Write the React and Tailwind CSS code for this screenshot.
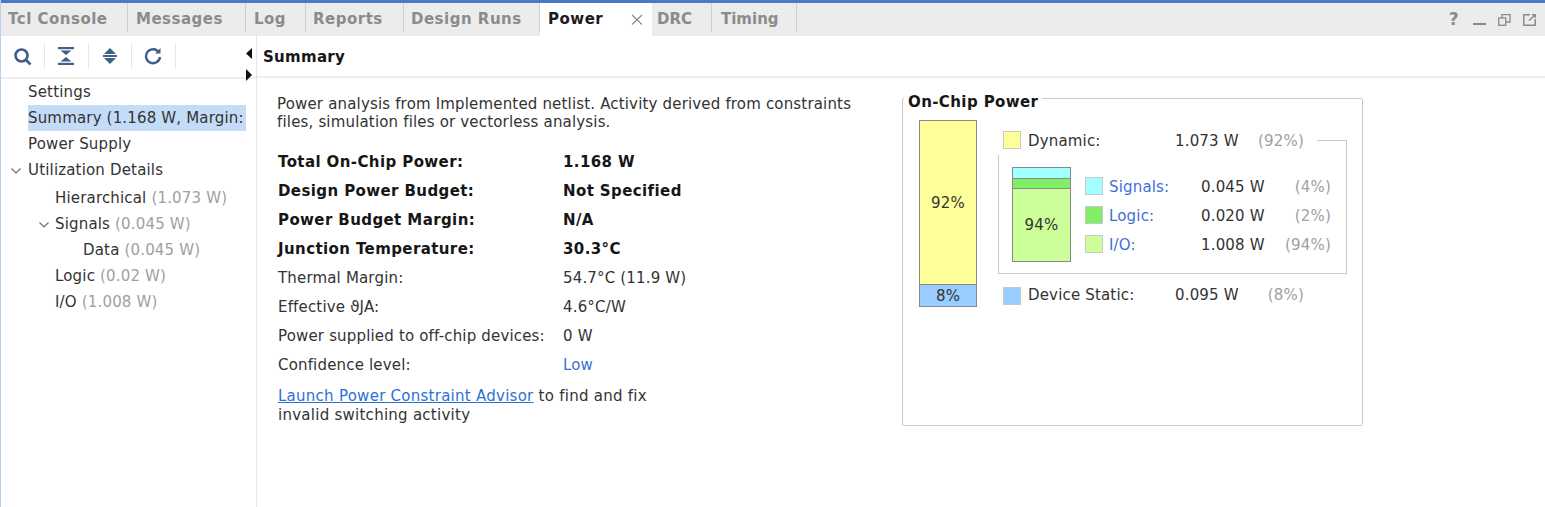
const tabs = [
  { label: 'Tcl Console', width: 'w-[127px] pl-[7px]' },
  { label: 'Messages', width: 'w-[118px] pl-[8px]' },
  { label: 'Log', width: 'w-[60px] pl-[8px]' },
  { label: 'Reports', width: 'w-[98px] pl-[7px]' },
  { label: 'Design Runs', width: 'w-[136px] pl-[7px]' },
];

const treeRows = [
  { label: 'Settings', indent: 'pl-[27px]' },
  { label: 'Summary (1.168 W, Margin:', indent: 'pl-[27px]', selected: true },
  { label: 'Power Supply', indent: 'pl-[27px]' },
  { label: 'Utilization Details', indent: 'pl-[27px]', open: 'left-[9px]' },
  { label: 'Hierarchical', value: '(1.073 W)', indent: 'pl-[54px] mt-[2px]' },
  { label: 'Signals', value: '(0.045 W)', indent: 'pl-[54px]', open: 'left-[37px]' },
  { label: 'Data', value: '(0.045 W)', indent: 'pl-[82px]' },
  { label: 'Logic', value: '(0.02 W)', indent: 'pl-[54px]' },
  { label: 'I/O', value: '(1.008 W)', indent: 'pl-[54px]' },
];

const summaryRows = [
  { label: 'Total On-Chip Power:', value: '1.168 W', bold: true },
  { label: 'Design Power Budget:', value: 'Not Specified', bold: true },
  { label: 'Power Budget Margin:', value: 'N/A', bold: true },
  { label: 'Junction Temperature:', value: '30.3°C', bold: true },
  { label: 'Thermal Margin:', value: '54.7°C (11.9 W)' },
  { label: 'Effective ϑJA:', value: '4.6°C/W' },
  { label: 'Power supplied to off-chip devices:', value: '0 W' },
  { label: 'Confidence level:', value: 'Low', link: true },
];

const dynamicRows = [
  { label: 'Signals', value: '0.045 W', pct: '(4%)', swatch: 'bg-[#a0ffff]' },
  { label: 'Logic', value: '0.020 W', pct: '(2%)', swatch: 'bg-[#80ee66]' },
  { label: 'I/O', value: '1.008 W', pct: '(94%)', swatch: 'bg-[#ccff99]' },
];

function Chevron({ className }) {
  return (
    <svg className={className} width="12" height="8" viewBox="0 0 12 8" fill="none" stroke="#6f6f6f" strokeWidth="1.2">
      <path d="M1.5 1.5 L6 6 L10.5 1.5" />
    </svg>
  );
}

function Sep() {
  return <div className="h-[26px] w-px bg-[#e6e6e6]" />;
}

function Toolbar() {
  return (
    <div className="flex h-[40px] items-center pl-[12px]">
      <svg width="19" height="19" viewBox="0 0 19 19" fill="none" stroke="#3f5f86" strokeWidth="2.6">
        <circle cx="8.5" cy="8.5" r="6" />
        <path d="M13 13 L17.5 17.5" />
      </svg>
      <div className="ml-[12px]"><Sep /></div>
      <svg className="ml-[13px]" width="16" height="18" viewBox="0 0 16 18" fill="#3f5f86">
        <rect x="0" y="0" width="16" height="2.2" />
        <path d="M2.5 3.5 H13.5 L8 8 Z" />
        <path d="M8 10 L13.5 14.5 H2.5 Z" />
        <rect x="0" y="15.8" width="16" height="2.2" />
      </svg>
      <div className="ml-[14px]"><Sep /></div>
      <svg className="ml-[13px]" width="16" height="18" viewBox="0 0 16 18" fill="#3f5f86">
        <path d="M8 1 L14 7 H2 Z" />
        <rect x="1" y="8" width="14" height="2" />
        <path d="M2 11 H14 L8 17 Z" />
      </svg>
      <div className="ml-[13px]"><Sep /></div>
      <svg className="ml-[12px]" width="18" height="18" viewBox="0 0 18 18" fill="none" stroke="#3f5f86" strokeWidth="2.4">
        <path d="M15 5.5 A7 7 0 1 0 16 10" />
        <path d="M16.5 1 V6.5 H11" fill="#3f5f86" stroke="none" />
      </svg>
      <div className="ml-[13px]"><Sep /></div>
    </div>
  );
}

function WindowIcons() {
  return (
    <div className="ml-auto flex items-center pr-[9px] text-[#8a8a8a]">
      <span className="mr-[14px] text-[17px] font-bold">?</span>
      <div className="mr-[12px] mt-[8px] h-[2px] w-[13px] bg-[#8a8a8a]" />
      <svg className="mr-[12px]" width="13" height="12" viewBox="0 0 13 12" fill="none" stroke="#8a8a8a" strokeWidth="1.3">
        <rect x="0.7" y="4" width="7" height="7.3" />
        <path d="M4 4 V0.7 H12 V8 H8" />
      </svg>
      <svg width="13" height="12" viewBox="0 0 13 12" fill="none" stroke="#8a8a8a" strokeWidth="1.5">
        <path d="M7 0.8 H0.8 V11.2 H12.2 V5" />
        <path d="M6 6.5 L12 1" />
        <path d="M9 0.8 H12.2 V4" />
      </svg>
    </div>
  );
}

function TabBar() {
  return (
    <div className="flex h-[36px] items-stretch border-t-[3px] border-[#4a7ac6] bg-[#ececec] font-bold tracking-[0.5px] text-[#8b8b8b]">
      {tabs.map((tab) => (
        <div key={tab.label} className={`flex ${tab.width} items-center`}>
          <span className="flex-1 whitespace-nowrap">{tab.label}</span>
          <div className="h-[29px] w-px self-start bg-[#cfcfcf]" />
        </div>
      ))}
      <div className="flex w-[112px] items-center justify-between bg-white pl-[8px] pr-[9px] text-[#1c1c1c]">
        <span>Power</span>
        <svg width="12" height="11" viewBox="0 0 12 11" fill="none" stroke="#8a8a8a" strokeWidth="1.1">
          <path d="M1 1 L11 10.5 M11 1 L1 10.5" />
        </svg>
      </div>
      <div className="flex w-[60px] items-center pl-[5px] tracking-[0px]">
        <span className="flex-1">DRC</span>
        <div className="h-[29px] w-px self-start bg-[#cfcfcf]" />
      </div>
      <div className="flex w-[85px] items-center pl-[9px] tracking-[0px]">
        <span className="flex-1">Timing</span>
        <div className="h-[29px] w-px self-start bg-[#cfcfcf]" />
      </div>
      <WindowIcons />
    </div>
  );
}

function Sidebar() {
  return (
    <div className="flex w-[256px] shrink-0 flex-col border-r border-[#e6e6e6]">
      <Toolbar />
      <div className="mt-[1px] border-t-2 border-[#eeeeee]">
        {treeRows.map((row) => (
          <div key={row.label} className={`relative flex h-[26px] items-center ${row.indent}`}>
            {row.open && <Chevron className={`absolute ${row.open} top-[10px]`} />}
            <span className={`whitespace-nowrap ${row.selected ? 'mr-[10px] flex h-[26px] flex-1 items-center overflow-hidden bg-[#c5dcf8]' : ''}`}>
              {row.label}
              {row.value && <span className="text-[#a0a0a0]"> {row.value}</span>}
            </span>
          </div>
        ))}
      </div>
      <svg className="absolute left-[244px] top-[48px]" width="8" height="33" viewBox="0 0 8 33" fill="#111">
        <path d="M7 0 V11 L1 5.5 Z" />
        <path d="M1 21 V33 L7 27 Z" />
      </svg>
    </div>
  );
}

function SummaryText() {
  return (
    <div className="w-[645px] shrink-0 pl-[20px] pt-[17px]">
      <p className="w-[590px] leading-[18px]">
        Power analysis from Implemented netlist. Activity derived from constraints files, simulation files or vectorless analysis.
      </p>
      <div className="mt-[17px]">
        {summaryRows.map((row) => (
          <div key={row.label} className={`flex h-[29px] items-center pl-[1px] ${row.bold ? 'font-bold tracking-[0.4px] text-[#161616]' : ''}`}>
            <span className="w-[285px] shrink-0 whitespace-nowrap">{row.label}</span>
            <span className={row.link ? 'text-[#3f6fd6]' : ''}>{row.value}</span>
          </div>
        ))}
      </div>
      <p className="mt-[7px] w-[395px] pl-[1px] leading-[19px] tracking-[0.26px]">
        <span className="text-[#2f6fd6] underline">Launch Power Constraint Advisor</span> to find and fix invalid switching activity
      </p>
    </div>
  );
}

function Swatch({ className }) {
  return <div className={`h-[18px] w-[18px] shrink-0 border border-[#c8c8c8] ${className}`} />;
}

function OnChipPower() {
  return (
    <fieldset className="mt-[9px] h-[339px] w-[461px] shrink-0 rounded-[2px] border border-[#c9c9c9] pl-[16px]">
      <legend className="relative top-[4px] ml-[-15px] px-[4px] font-bold tracking-[0.4px] text-[#161616]">On-Chip Power</legend>
      <div className="flex pt-[10px]">
        <div className="flex h-[187px] w-[58px] shrink-0 flex-col border border-[#8a8a8a] text-center">
          <div className="flex h-[163px] items-center justify-center bg-[#ffff99] pt-[2px]">92%</div>
          <div className="flex flex-1 items-center justify-center border-t border-[#8a8a8a] bg-[#99ccff] pt-[2px] leading-[18px]">8%</div>
        </div>
        <div className="relative ml-[21px] w-[349px]">
          <div className="mt-[11px] flex h-[18px] items-center pl-[5px]">
            <Swatch className="bg-[#ffff99]" />
            <span className="ml-[7px] mt-[4px] w-[147px]">Dynamic:</span>
            <span className="mt-[4px] w-[73px] whitespace-nowrap">1.073 W</span>
            <span className="mt-[4px] w-[56px] text-right text-[#a0a0a0]">(92%)</span>
          </div>
          <div className="absolute right-0 top-[20px] h-[15px] w-[30px] border-r border-t border-[#c9c9c9]" />
          <div className="mt-[6px] flex h-[119px] border-b border-l border-r border-[#c9c9c9] pl-[13px] pt-[12px]">
            <div className="flex h-[95px] w-[59px] shrink-0 flex-col border border-[#8a8a8a] text-center">
              <div className="h-[11px] border-b border-[#8a8a8a] bg-[#a0ffff]" />
              <div className="h-[10px] border-b border-[#8a8a8a] bg-[#80ee66]" />
              <div className="flex flex-1 items-center justify-center bg-[#ccff99] pt-[2px]">94%</div>
            </div>
            <div className="ml-[14px] flex flex-col gap-[11px] pt-[10px]">
              {dynamicRows.map((row) => (
                <div key={row.label} className="flex h-[18px] items-center">
                  <Swatch className={row.swatch} />
                  <span className="ml-[6px] mt-[4px] w-[92px] text-[#3f6fd6]">{row.label}:</span>
                  <span className="mt-[4px] w-[73px] whitespace-nowrap">{row.value}</span>
                  <span className="mt-[4px] w-[57px] text-right text-[#a0a0a0]">{row.pct}</span>
                </div>
              ))}
            </div>
          </div>
          <div className="mt-[13px] flex h-[18px] items-center pl-[5px]">
            <Swatch className="bg-[#99ccff]" />
            <span className="ml-[7px] w-[147px]">Device Static:</span>
            <span className="w-[73px] whitespace-nowrap">0.095 W</span>
            <span className="w-[56px] text-right text-[#a0a0a0]">(8%)</span>
          </div>
        </div>
      </div>
    </fieldset>
  );
}

export default function App() {
  return (
    <div className="relative flex h-[507px] w-[1545px] flex-col overflow-hidden border-l border-[#b9d0ee] bg-white font-['DejaVu_Sans',sans-serif] text-[15px] tracking-[0.17px] text-[#333333]">
      <TabBar />
      <div className="flex flex-1">
        <Sidebar />
        <div className="flex flex-1 flex-col">
          <div className="flex h-[42px] items-center border-b-2 border-[#eeeeee] pl-[6px] pt-[3px] font-bold tracking-[0.3px] text-[#161616]">Summary</div>
          <div className="flex">
            <SummaryText />
            <OnChipPower />
          </div>
        </div>
      </div>
    </div>
  );
}
